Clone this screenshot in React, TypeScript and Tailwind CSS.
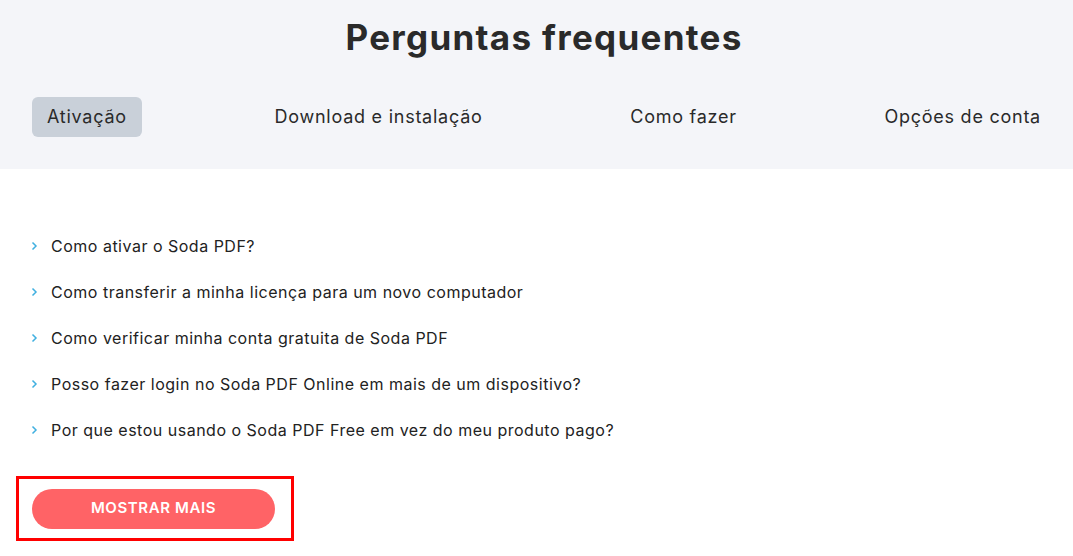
const tabs = ["Ativação", "Download e instalação", "Como fazer", "Opções de conta"];

const questions = [
  "Como ativar o Soda PDF?",
  "Como transferir a minha licença para um novo computador",
  "Como verificar minha conta gratuita de Soda PDF",
  "Posso fazer login no Soda PDF Online em mais de um dispositivo?",
  "Por que estou usando o Soda PDF Free em vez do meu produto pago?",
];

function Chevron() {
  return (
    <svg width="7" height="10" viewBox="0 0 7 10" className="shrink-0">
      <path d="M1.5 1.5 L5 5 L1.5 8.5" fill="none" stroke="#40b0e0" strokeWidth="1.5" />
    </svg>
  );
}

export default function App() {
  return (
    <div className="w-[1073px] h-[556px] overflow-hidden bg-white text-[#222] font-['Inter',sans-serif]">
      <section className="bg-[#f4f5f9] h-[169px] pl-[32px] pr-[17px] flex flex-col">
        <h1 className="text-[35px] font-bold text-[#2a2a2a] text-center leading-none pt-[20px] tracking-[1.3px]">
          Perguntas frequentes
        </h1>
        <nav className="flex justify-between mt-[42px]">
          {tabs.map((t, i) => (
            <button
              key={t}
              className={
                "h-[40px] px-[15px] rounded-[6px] text-[18px] leading-none pb-[1px] text-[#2a2a2a] tracking-[0.75px] " +
                (i === 0 ? "bg-[#c9d0d9]" : "")
              }
            >
              {t}
            </button>
          ))}
        </nav>
      </section>
      <ul className="pt-[66px] pl-[31px] flex flex-col gap-[25px]">
        {questions.map((q) => (
          <li key={q} className="flex items-center gap-[13px] h-[21px] text-[16px] tracking-[0.5px]">
            <Chevron />
            <span>{q}</span>
          </li>
        ))}
      </ul>
      <div className="mt-[36px] ml-[16px] w-[278px] h-[65px] border-[3px] border-[#ff0000] flex items-center pl-[13px]">
        <button className="w-[243px] h-[40px] rounded-full bg-[#ff6366] text-white text-[15px] font-semibold tracking-[0.6px]">
          MOSTRAR MAIS
        </button>
      </div>
    </div>
  );
}
